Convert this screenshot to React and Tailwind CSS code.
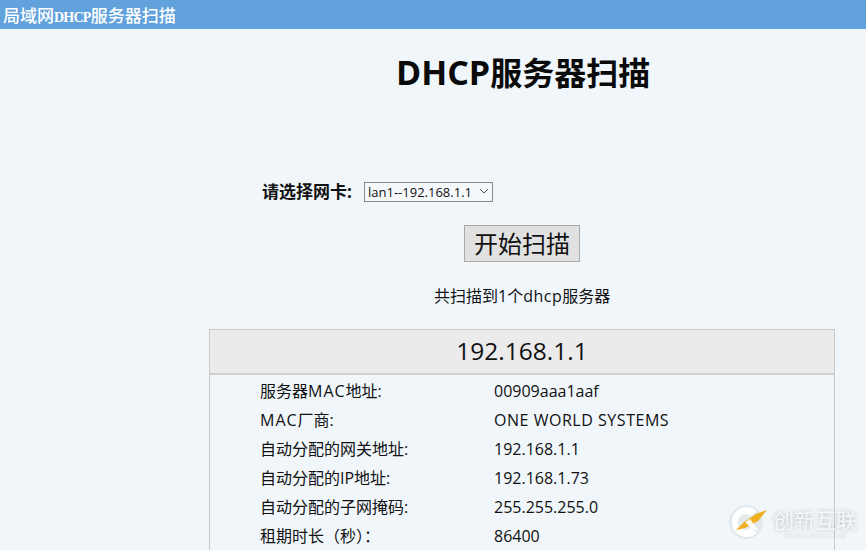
const body = { fontFamily: '"Open Sans", "Noto Sans CJK SC", sans-serif' };
const rows = [
  [<>服务器<span className="tracking-[1px]">MAC</span>地址:</>, "00909aaa1aaf"],
  [<><span className="tracking-[1px]">MAC</span>厂商:</>, <span className="tracking-[0.53px]">ONE WORLD SYSTEMS</span>],
  ["自动分配的网关地址:", "192.168.1.1"],
  ["自动分配的IP地址:", "192.168.1.73"],
  ["自动分配的子网掩码:", "255.255.255.0"],
  ["租期时长（秒）：", "86400"],
];

function Watermark() {
  return (
    <div className="absolute left-[731px] top-[503px] flex items-start gap-[6px]">
      <svg width="36" height="36" viewBox="0 0 36 36" className="overflow-visible">
        <circle cx="15" cy="19" r="17" fill="#c9ced2" opacity="0.35" />
        <path d="M26 8 A15 15 0 1 0 26 30 L20 25 A8 8 0 1 1 20 13 Z" fill="#ffffff" />
        <path d="M5 27 L13 19 L25 11 L36 7 L27 18 L14 25 Z" fill="#eeb01e" />
        <path d="M14 19 L19 16 L28 28 L21 26 Z" fill="#ffffff" opacity="0.9" />
      </svg>
      <div className="flex flex-col items-center">
        <span className="mt-[5px] text-[21px] leading-[24px] text-[#f6f8fa] [text-shadow:0_0_4px_rgba(0,0,0,0.25)]">创新互联</span>
        <span className="mt-[1px] text-[5px] leading-[6px] tracking-[0.6px] text-[#f6f8fa] [text-shadow:0_0_2px_rgba(0,0,0,0.25)]">CHUANG XIN HU LIAN</span>
      </div>
    </div>
  );
}

export default function App() {
  return (
    <div className="relative h-[550px] w-[866px] overflow-hidden bg-[#f0f6fa] text-[#111]" style={body}>
      <header className="flex h-[29px] items-end bg-[#62a2dc] pl-[3px] text-[17px] font-medium leading-[22px] text-white" style={{ fontFamily: '"Liberation Serif", "Noto Sans CJK SC", serif' }}>
        <span>局域网<span className="text-[14px] font-bold tracking-[-0.75px]">DHCP</span>服务器扫描</span>
      </header>

      <h1 className="mt-[19px] pl-[396px] text-[32px] font-bold leading-[48px] text-[#0a0a0a]"><span className="text-[34px]">DHCP</span>服务器扫描</h1>

      <div className="mt-[84px] flex items-center pl-[262px]">
        <label className="w-[102px] text-[17px] font-bold leading-[22px]">请选择网卡:</label>
        <div className="relative">
          <select className="block h-[20px] w-[129px] appearance-none rounded-none border border-[#8a8a8a] bg-[#f6f9fc] pl-[3px] text-[13px] leading-[18px] text-[#111]">
            <option>lan1--192.168.1.1</option>
          </select>
          <svg className="pointer-events-none absolute right-[4px] top-[6px]" width="10" height="7" viewBox="0 0 10 7" fill="none" stroke="#555" strokeWidth="1"><path d="M1 1 L5 5 L9 1" /></svg>
        </div>
      </div>

      <div className="mt-[22px] pl-[464px]">
        <button className="block h-[37px] w-[116px] border border-[#a8a8a8] bg-[#e1e1e1] text-[24px] leading-none text-[#111]">开始扫描</button>
      </div>

      <p className="mt-[23px] pl-[434px] text-[16px] leading-[22px]">共扫描到1个<span className="tracking-[0.5px]">dhcp</span>服务器</p>

      <section className="ml-[209px] mt-[22px] w-[626px] border border-[#c9c9c9]">
        <div className="flex h-[45px] items-center justify-center border-b-2 border-[#cfcfcf] bg-[#ebebeb] pb-[1px] text-[24.5px]">192.168.1.1</div>
        <div className="pt-[1px]">
          {rows.map(([k, v], i) => (
            <div key={i} className="flex h-[29px] items-center pl-[50px] text-[16px] leading-[22px]">
              <span className="w-[234px]">{k}</span>
              <span>{v}</span>
            </div>
          ))}
        </div>
      </section>

      <Watermark />
    </div>
  );
}
